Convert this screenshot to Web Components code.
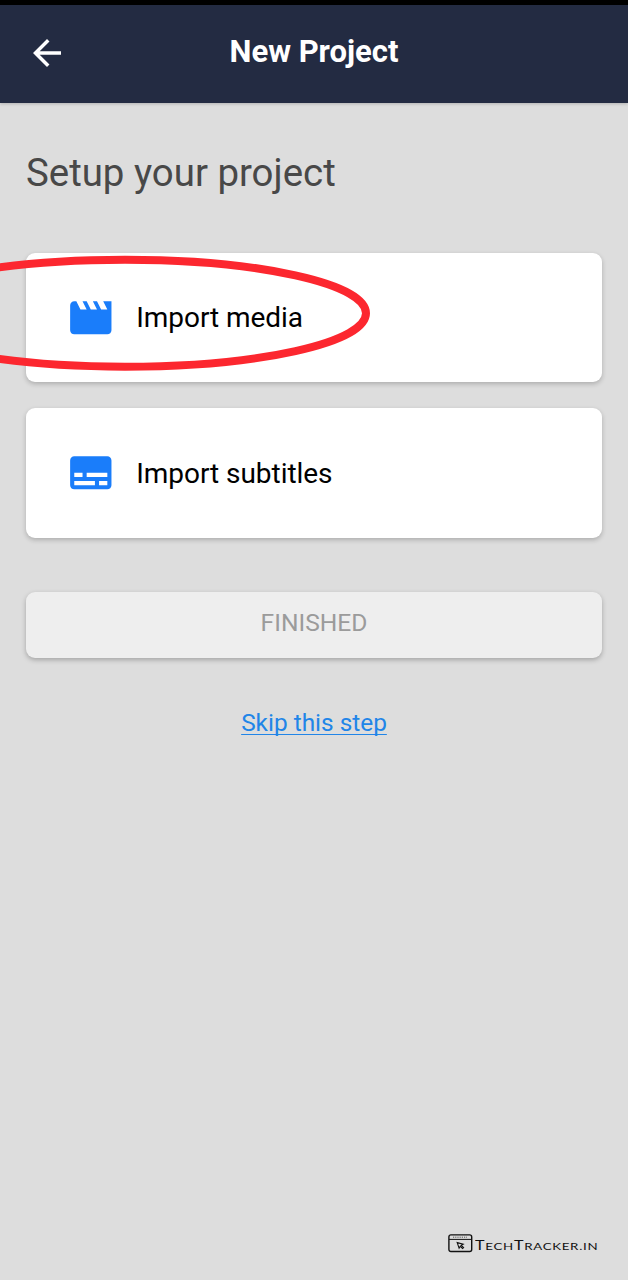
<!DOCTYPE html>
<html lang="en">
<head>
<meta charset="utf-8">
<title>New Project</title>
<style>
html,body{margin:0;height:100%}
body{background:#ddd;font-family:Roboto,"Liberation Sans",sans-serif;overflow:hidden}
</style>
</head>
<body>
<project-setup></project-setup>
<script>
const define = (name, html) => customElements.define(name, class extends HTMLElement {
  constructor() {
    super();
    this.attachShadow({ mode: 'open' }).innerHTML = html;
  }
});

define('app-bar', `
<style>
:host{box-sizing:border-box;height:103px;border-top:5px solid #000;background:#232b42;display:grid;grid-template-columns:80px 1fr 80px;color:#fff;box-shadow:0 1px 3px rgba(0,0,0,.2)}
svg{width:42px;height:42px;margin:27px 0 0 26px;display:block}
h1{margin:28px 0 0;font-size:31px;line-height:38px;font-weight:700;text-align:center;white-space:nowrap}
</style>
<svg viewBox="0 0 24 24" fill="#fff"><path d="M20 11H7.83l5.59-5.59L12 4l-8 8 8 8 1.41-1.41L7.83 13H20v-2z"/></svg>
<h1><slot></slot></h1>`);

define('import-card', `
<style>
:host{box-sizing:border-box;height:129.3px;display:flex;align-items:center;gap:20.7px;padding-left:40px;background:#fff;border-radius:9px;box-shadow:0 2px 5px rgba(0,0,0,.22);color:#000;font-size:28px;line-height:34px;letter-spacing:-.05px}
::slotted(svg){width:49.6px;height:49.6px;flex:none;fill:#1a7dfa}
span{padding-top:1.4px}
</style>
<slot name="icon"></slot><span><slot></slot></span>`);

define('finish-button', `
<style>
:host{box-sizing:border-box;height:66.5px;display:block;padding-top:16px;text-align:center;background:#eee;border-radius:9px;box-shadow:0 2px 5px rgba(0,0,0,.26);color:#9b9b9b;font-size:24.6px;line-height:30px}
</style>
<slot></slot>`);

define('skip-link', `
<style>
:host{display:block;text-align:center;font-size:24.4px;line-height:30px}
a{color:#2185e8;text-decoration:underline;text-decoration-thickness:1.4px;text-underline-offset:2.6px;text-decoration-skip-ink:none}
</style>
<a><slot></slot></a>`);

define('red-ring', `
<style>
:host{position:absolute;left:0;top:250px;width:380px;height:126px;pointer-events:none}
svg{display:block}
</style>
<svg width="380" height="126"><ellipse cx="125" cy="63.2" rx="241" ry="53.5" fill="none" stroke="#fc272f" stroke-width="8"/></svg>`);

define('site-mark', `
<style>
:host{display:flex;align-items:flex-start;color:#111;font-family:Lato,sans-serif;white-space:nowrap;line-height:16px}
svg{display:block;width:25px;height:19px;flex:none}
span{display:block;margin:4px 0 0 2px;font-size:10.2px;letter-spacing:.54px;transform:scaleX(1.305);transform-origin:0 50%}
b{font-weight:400;font-size:12.4px}
</style>
<svg viewBox="0 0 25 19" fill="none" stroke="#111"><rect x=".9" y=".9" width="22.8" height="16.6" rx="2" stroke-width="1.4"/><path d="M1 5.4h22.6" stroke-width="1"/><path d="M5 3.2h14" stroke-width="1" stroke-dasharray="1.2 1" opacity=".65"/><path d="M9.2 8.6l6 1.6-2 1.1 2.4 2.2-1 1-2.4-2.2-1.1 1.9z" stroke-width="1.1"/></svg>
<span><b>T</b>ECH<b>T</b>RACKER.IN</span>`);

define('project-setup', `
<style>
:host{position:relative;box-sizing:border-box;display:flex;flex-direction:column;height:1280px;overflow:hidden}
main{display:flex;flex-direction:column;padding:0 26px;flex:1}
h2{margin:46px 0 57px;font-size:38.4px;line-height:47px;font-weight:400;color:#484848;white-space:nowrap}
.cards{display:grid;gap:26px}
finish-button{margin-top:54px}
skip-link{margin-top:49.6px}
site-mark{margin:auto 5px 26px auto;width:149px}
</style>
<app-bar>New Project</app-bar>
<main>
  <h2>Setup your project</h2>
  <div class="cards">
    <import-card><svg slot="icon" viewBox="0 0 24 24"><path d="M18 4l2 4h-3l-2-4h-2l2 4h-3l-2-4H8l2 4H7L5 4H4c-1.1 0-1.99.9-1.99 2L2 18c0 1.1.9 2 2 2h16c1.1 0 2-.9 2-2V4h-4z"/></svg>Import media</import-card>
    <import-card><svg slot="icon" viewBox="0 0 24 24"><path d="M20 4H4c-1.1 0-2 .9-2 2v12c0 1.1.9 2 2 2h16c1.1 0 2-.9 2-2V6c0-1.1-.9-2-2-2zM4 12h4v2H4v-2zm10 6H4v-2h10v2zm6 0h-4v-2h4v2zm0-4H10v-2h10v2z"/></svg>Import subtitles</import-card>
  </div>
  <finish-button>FINISHED</finish-button>
  <skip-link>Skip this step</skip-link>
  <site-mark></site-mark>
</main>
<red-ring></red-ring>`);
</script>
</body>
</html>
